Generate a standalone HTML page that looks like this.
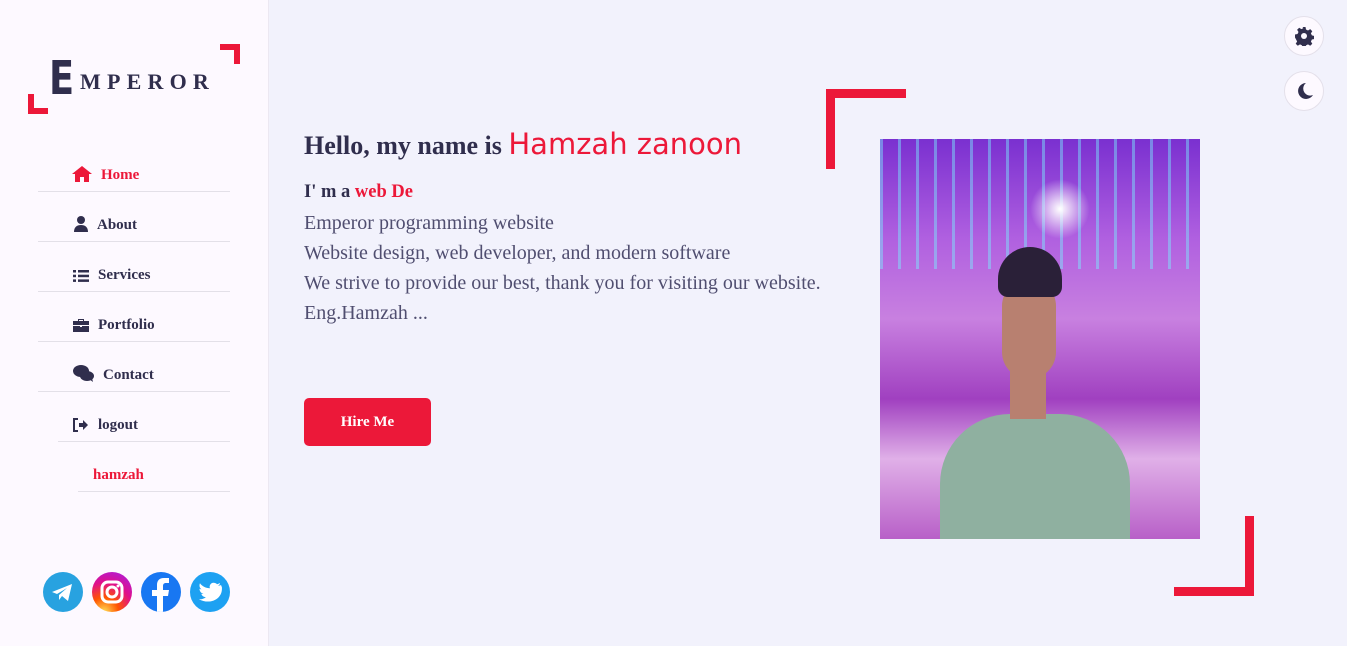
<!DOCTYPE html>
<html><head><meta charset="utf-8"><style>
*{margin:0;padding:0;box-sizing:border-box}
body{width:1347px;height:646px;background:#f2f2fc;font-family:"Liberation Serif",serif;position:relative;overflow:hidden;color:#302e4d}
.side{position:absolute;left:0;top:0;width:269px;height:646px;background:#fdf9ff;border-right:1px solid #ece8f2}
.abs{position:absolute}
.nav{position:absolute;left:38px;width:192px;height:50px;border-bottom:1px solid #e3e0e8;font-weight:bold;font-size:15px;display:flex;align-items:flex-end;padding-bottom:7px}
.nav svg{margin-right:9px;margin-bottom:2px}
.soc{position:absolute;top:572px;width:40px;height:40px;border-radius:50%}
.p{font-size:20px;color:#504e70;line-height:30px}
.btn{position:absolute;left:304px;top:398px;width:127px;height:48px;background:#ec1839;border-radius:5px;color:#fff;font-weight:bold;font-size:15px;text-align:center;line-height:48px}
.rb{position:absolute;width:40px;height:40px;border-radius:50%;background:#fdf9ff;border:1px solid #e4e0ea;display:flex;align-items:center;justify-content:center}
</style></head><body>
<div class="side">
 <div class="abs" style="left:220px;top:44px;width:20px;height:20px;border-top:6px solid #ec1839;border-right:6px solid #ec1839"></div>
 <div class="abs" style="left:28px;top:94px;width:20px;height:20px;border-bottom:6px solid #ec1839;border-left:6px solid #ec1839"></div>
 <div class="abs" style="left:49px;top:58px;font-size:46px;font-weight:bold;font-family:'DejaVu Sans',sans-serif;color:#302e4d;line-height:40px;transform:scaleX(.8);transform-origin:left">E</div>
 <div class="abs" style="left:80px;top:69px;font-size:22px;letter-spacing:6.2px;font-weight:bold;color:#302e4d">MPEROR</div>

 <div class="nav" style="top:142px;color:#ec1839;padding-left:34px"><svg width="20" height="16" viewBox="0 0 20 16"><path d="M10 0L0 8h3v8h5v-5h4v5h5V8h3z" fill="#ec1839"/></svg>Home</div>
 <div class="nav" style="top:192px;padding-left:36px"><svg width="14" height="16" viewBox="0 0 14 16"><circle cx="7" cy="4" r="4" fill="#302e4d"/><path d="M0 16c0-5 3-7 7-7s7 2 7 7z" fill="#302e4d"/></svg>About</div>
 <div class="nav" style="top:242px;padding-left:35px"><svg width="16" height="12" viewBox="0 0 16 12"><g fill="#302e4d"><rect x="0" y="0" width="3" height="2.5"/><rect x="0" y="4.7" width="3" height="2.5"/><rect x="0" y="9.4" width="3" height="2.5"/><rect x="5" y="0" width="11" height="2.5"/><rect x="5" y="4.7" width="11" height="2.5"/><rect x="5" y="9.4" width="11" height="2.5"/></g></svg>Services</div>
 <div class="nav" style="top:292px;padding-left:35px"><svg width="16" height="14" viewBox="0 0 16 14"><path d="M5 3V1h6v2h5v4H0V3zM6 2v1h4V2zM0 8h7v1h2V8h7v6H0z" fill="#302e4d"/></svg>Portfolio</div>
 <div class="nav" style="top:342px;padding-left:35px"><svg width="21" height="17" viewBox="0 0 21 17"><ellipse cx="8" cy="6" rx="8" ry="6" fill="#302e4d"/><ellipse cx="14" cy="11" rx="7" ry="5" fill="#302e4d"/><path d="M16 14l4 3-1-4z" fill="#302e4d"/></svg>Contact</div>
 <div class="nav" style="top:392px;left:58px;width:172px;padding-left:15px"><svg width="16" height="14" viewBox="0 0 16 14"><path d="M5 1H1v12h4" stroke="#302e4d" stroke-width="2" fill="none"/><path d="M6 5h4V2l5 5-5 5V9H6z" fill="#302e4d"/></svg>logout</div>
 <div class="nav" style="top:442px;left:78px;width:152px;padding-left:15px;color:#ec1839">hamzah</div>

 <div class="soc" style="left:43px;background:#28a2e0"><svg width="40" height="40" viewBox="0 0 40 40"><path d="M9 20l20-8-4 17-6-5-3 4v-5l8-7-10 6z" fill="#fff"/></svg></div>
 <div class="soc" style="left:92px;background:radial-gradient(circle at 30% 100%,#fd5 0%,#f50 30%,#e0108a 60%,#a020f0 100%)"><svg width="40" height="40" viewBox="0 0 40 40"><rect x="10" y="10" width="20" height="20" rx="6" stroke="#fff" stroke-width="3" fill="none"/><circle cx="20" cy="20" r="5" stroke="#fff" stroke-width="3" fill="none"/><circle cx="26" cy="14" r="1.5" fill="#fff"/></svg></div>
 <div class="soc" style="left:141px;background:#1877f2;overflow:hidden"><svg width="40" height="40" viewBox="0 0 40 40"><path d="M22 40V24h5l1-6h-6v-4c0-2 1-3 3-3h3V6h-5c-5 0-7 3-7 7v5h-5v6h5v16z" fill="#fff"/></svg></div>
 <div class="soc" style="left:190px;background:#1da1f2"><svg width="40" height="40" viewBox="0 0 40 40"><path d="M31 13c-1 .5-2 .7-3 .8 1-.6 2-1.6 2-2.8-1 .6-2 1-3 1.2-2-2-6-2-7 1-.5 1-.5 2 0 3-4 0-8-2-10-5-1 2-.5 5 1.5 6-1 0-1.5-.3-2-.5 0 2.5 1.6 4.5 4 5-1 .3-1.6.3-2.2.1.6 2 2.5 3.4 4.6 3.4-2 1.6-5 2.4-7 2 11 6 24 0 23-12z" fill="#fff"/></svg></div>
</div>

<div class="abs" style="left:304px;top:127px;font-size:26px;font-weight:bold;color:#302e4d">Hello, my name is <span style="font-family:'Comic Sans MS','DejaVu Sans',sans-serif;color:#ec1839;font-size:29px;font-weight:normal">Hamzah zanoon</span></div>
<div class="abs" style="left:304px;top:182px;font-size:18.5px;font-weight:bold;color:#302e4d">I' m a <span style="color:#ec1839">web De</span></div>
<div class="abs p" style="left:304px;top:208px">Emperor programming website<br>Website design, web developer, and modern software<br>We strive to provide our best, thank you for visiting our website.<br>Eng.Hamzah ...</div>
<div class="btn">Hire Me</div>

<div class="abs" style="left:826px;top:89px;width:80px;height:80px;border-top:9px solid #ec1839;border-left:9px solid #ec1839"></div>
<div class="abs" style="left:1174px;top:516px;width:80px;height:80px;border-bottom:9px solid #ec1839;border-right:9px solid #ec1839"></div>

<div class="abs" style="left:880px;top:139px;width:320px;height:400px;overflow:hidden;background:linear-gradient(180deg,#7a30d0 0%,#b060e0 25%,#c880e0 45%,#a040c0 65%,#e0b0e8 80%,#b860c8 100%)">
 <div class="abs" style="left:0;top:0;width:320px;height:130px;background:repeating-linear-gradient(90deg,rgba(120,240,255,.45) 0 3px,transparent 3px 18px)"></div>
 <div class="abs" style="left:150px;top:40px;width:60px;height:60px;border-radius:50%;background:radial-gradient(#fff,rgba(255,255,255,0) 70%)"></div>
 <div class="abs" style="left:60px;top:275px;width:190px;height:140px;border-radius:70px 70px 0 0;background:#8fb0a0"></div>
 <div class="abs" style="left:130px;top:230px;width:36px;height:50px;background:#b88070"></div>
 <div class="abs" style="left:122px;top:140px;width:54px;height:100px;border-radius:27px;background:#b88070"></div>
 <div class="abs" style="left:118px;top:108px;width:64px;height:50px;border-radius:32px 32px 10px 10px;background:#2a2038"></div>
</div>

<div class="rb" style="left:1284px;top:16px"><svg width="20" height="20" viewBox="0 0 20 20"><path d="M8.5 1h3l.5 2.5 2 1 2.2-1.4 2.1 2.1-1.4 2.2 1 2 2.6.6v3l-2.6.5-1 2 1.4 2.2-2.1 2.1-2.2-1.4-2 1-.5 2.6h-3l-.5-2.6-2-1-2.2 1.4-2.1-2.1 1.4-2.2-1-2L1 11.5v-3l2.5-.5 1-2-1.4-2.2 2.1-2.1 2.2 1.4 2-1z" fill="#302e4d"/><circle cx="10" cy="10" r="3" fill="#fdf9ff"/></svg></div>
<div class="rb" style="left:1284px;top:71px"><svg width="20" height="20" viewBox="0 0 20 20"><path d="M12 2a8 8 0 1 0 7 12A7 7 0 0 1 12 2z" fill="#302e4d"/></svg></div>
</body></html>
